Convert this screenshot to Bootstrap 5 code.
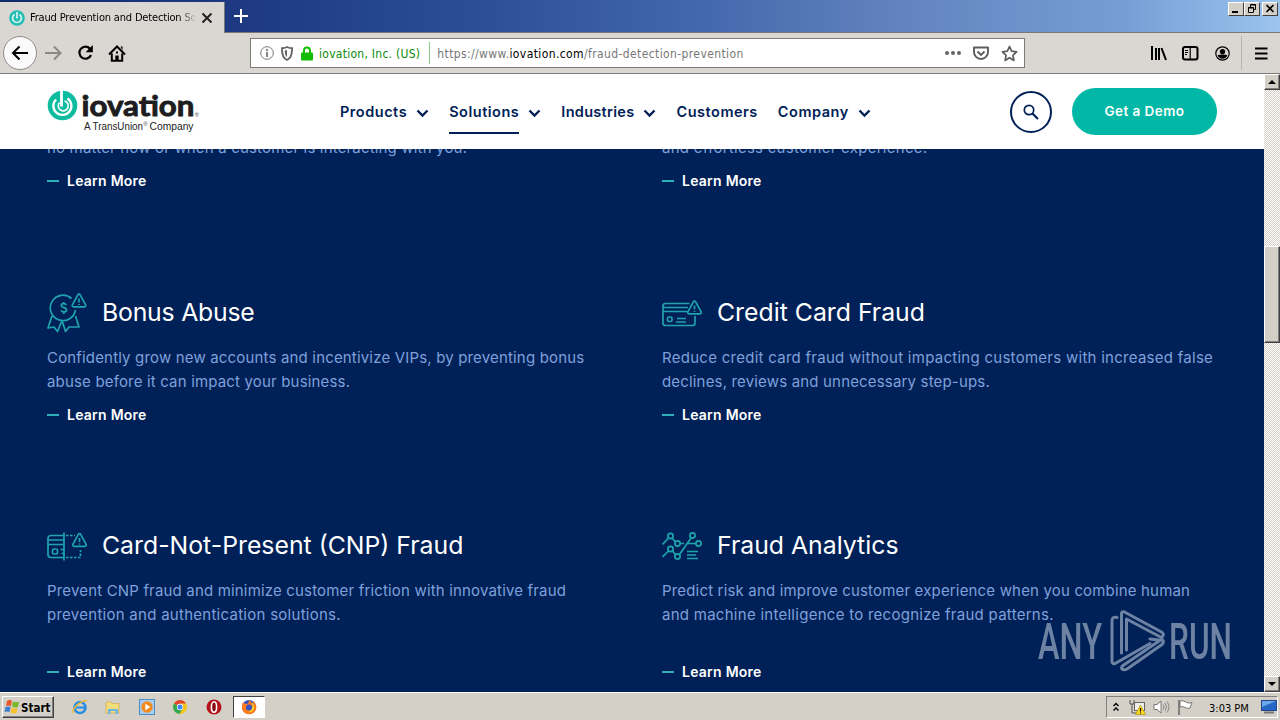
<!DOCTYPE html>
<html lang="en">
<head>
<meta charset="utf-8">
<meta name="viewport" content="width=device-width, initial-scale=1">
<title>Fraud Prevention and Detection Solutions</title>
<link href="https://cdn.jsdelivr.net/npm/bootstrap@5.3.0/dist/css/bootstrap.min.css" rel="stylesheet">
<style>
  :root { --navy:#002157; --teal:#00b8a5; --chrome:#dad7d3; --face:#d4d0c8; --copy:#7fa0dc; }
  body { width:1280px; height:720px; overflow:hidden; font-family:Inter,"Liberation Sans",sans-serif; background:var(--navy); }
  svg { display:block; flex:none; }
  .ui { font-family:"DejaVu Sans Condensed","DejaVu Sans",sans-serif; font-size:11px; color:#000; white-space:nowrap; }
  .tabstrip { height:33px; background:linear-gradient(90deg,#0f2c6c 0,#1f3c86 22%,#2c4f98 38%,#4468ad 55%,#6282bd 70%,#769fd6 88%,#9cc4ee 100%); border-bottom:1px solid #77787a; }
  .tab-active { width:225px; height:31px; margin-top:2px; background:var(--chrome); border-right:1px solid #77787a; padding-left:9px; }
  .tab-title { width:166px; margin-left:5px; padding-top:1px; letter-spacing:-.17px; overflow:hidden; -webkit-mask-image:linear-gradient(90deg,#000 90%,transparent 100%); mask-image:linear-gradient(90deg,#000 90%,transparent 100%); }
  .winbtns { margin:2px 2px 0 0; }
  .winbtn { width:16px; height:14px; background:var(--face); border:1px solid; border-color:#fff #404040 #404040 #fff; }
  .toolbar { height:41px; background:var(--chrome); border-bottom:1px solid #7d7b78; }
  .backbtn { width:34px; height:34px; border:1px solid #8f8d8a; background:#fafafa; }
  .urlbar { width:775px; height:30px; border:1px solid #7e7b77; background:#fff; }
  .ev { color:#0a8a0a; font-size:12px; letter-spacing:.27px; padding-top:1px; }
  .addr { color:#777; font-size:12px; letter-spacing:.39px; padding-top:1px; }
  .addr b { color:#000; font-weight:400; }
  .viewport { height:618px; }
  .site { width:1264px; background:var(--navy); }
  .masthead { height:75px; background:#fff; color:var(--navy); }
  .masthead a { color:var(--navy); text-decoration:none; font-weight:600; font-size:14.5px; letter-spacing:.52px; }
  .masthead a.snug { letter-spacing:.3px; }
  .current { box-shadow:0 2px 0 var(--navy); }
  .menuitem { height:42px; line-height:44px; }
  .search { width:42px; height:42px; border:2px solid var(--navy); }
  .demo { width:145px; height:47px; background:var(--teal); color:#fff; font-size:13.5px; font-weight:600; letter-spacing:.45px; }
  .topics { height:543px; padding:0 0 0 47px; }
  .topic { flex:none; width:615px; height:233px; }
  .topic h3 { font-size:24.8px; font-weight:400; line-height:40px; color:#fff; margin:0 0 0 15px; white-space:nowrap; }
  .topic h3.snug { letter-spacing:-.22px; }
  .topic .pic { margin-top:2px; }
  .topic p { font-size:15px; line-height:24px; color:var(--copy); letter-spacing:.17px; margin:13px 0 0; white-space:nowrap; }
  .topic p.lead-out { margin-top:0; }
  .topic .wide { letter-spacing:.27px; }
  .learn { font-size:14px; line-height:20px; font-weight:600; letter-spacing:.25px; color:#fff; text-decoration:none; white-space:nowrap; margin-top:11px; }
  .learn.spaced { margin-top:35px; }
  .learn::before { content:""; width:12px; height:2px; background:#2fb0b8; margin-right:8px; }
  .scrollbar { width:16px; background:repeating-conic-gradient(#d4d0c8 0 25%,#fff 0 50%) 0 0/2px 2px; }
  .sb { width:16px; height:16px; background:var(--face); border:1px solid; border-color:#fff #404040 #404040 #fff; box-shadow:inset -1px -1px #808080; }
  .thumb { height:97px; margin-top:156px; }
  .watermark { left:1036px; top:606px; }
  .taskbar { height:28px; background:var(--face); border-top:1px solid #fff; }
  .start { width:52px; height:22px; border:1px solid; border-color:#fff #404040 #404040 #fff; box-shadow:inset -1px -1px #808080; font-weight:700; font-size:11.500px; }
  .task-on { width:32px; height:22px; background:#fff; border:1px solid; border-color:#404040 #fff #fff #404040; }
  .tray { width:172px; height:22px; border:1px solid; border-color:#808080 #fff #fff #808080; }
</style>
</head>
<body>
<svg width="0" height="0" class="position-absolute"><defs>
  <g id="warn"><path d="M8 1.2c.7 0 1 .4 1.300 1l5.300 9.600c.5 1-.1 2-1.200 2H2.600c-1.100 0-1.700-1-1.200-2L6.700 2.200c.3-.6.6-1 1.300-1z"/><path d="M8 5.500v4M8 11v1"/></g>
  <path id="chev" d="M1.500 1.500l5 5 5-5" fill="none" stroke="#002157" stroke-width="2.400"/>
</defs></svg>

<div class="tabstrip ui d-flex justify-content-between">
  <div class="d-flex">
    <div class="tab-active d-flex align-items-center">
      <svg width="16" height="16" viewBox="0 0 16 16"><circle cx="8" cy="8" r="7.800" fill="#25bdb3"/><path d="M5.500 4.500a4.400 4.400 0 1 0 5 0M8 2v6.500" fill="none" stroke="#d9f5f0" stroke-width="1.700"/></svg>
      <div class="tab-title">Fraud Prevention and Detection Solutions</div>
      <svg style="margin-left:5px" width="12" height="12"><path d="M1.500 1.500l9 9m0-9l-9 9" stroke="#222" stroke-width="2"/></svg>
    </div>
    <svg class="mt-2 ms-2" width="16" height="16"><path d="M8 1v14M1 8h14" stroke="#fff" stroke-width="2"/></svg>
  </div>
  <div class="winbtns d-flex">
    <div class="winbtn"><svg width="14" height="12"><path d="M3 9h6" stroke="#000" stroke-width="2"/></svg></div>
    <div class="winbtn"><svg width="14" height="12"><path d="M5.500 4V1.500h5v5H8.500M5 2h6M3.500 4.500h5v5h-5zM3 5h6" fill="none" stroke="#000"/></svg></div>
    <div class="winbtn" style="margin-left:2px"><svg width="14" height="12"><path d="M3.500 2l7 7m0-7l-7 7" stroke="#000" stroke-width="1.700"/></svg></div>
  </div>
</div>

<div class="toolbar ui d-flex align-items-center">
  <div class="backbtn rounded-circle d-flex align-items-center justify-content-center" style="margin-left:3px"><svg width="18" height="16"><path d="M17 8H2M8.500 1.500L2 8l6.500 6.500" fill="none" stroke="#000" stroke-width="2"/></svg></div>
  <svg style="margin-left:8px" width="17" height="16"><path d="M0 8h15M9 1.500L15.500 8 9 14.500" fill="none" stroke="#8b8986" stroke-width="2"/></svg>
  <svg style="margin-left:15px" width="18" height="16"><path d="M13 3.800A6 6 0 1 0 14 10" fill="none" stroke="#000" stroke-width="2.200"/><path d="M15.800 0v7.200H8.600z"/></svg>
  <svg style="margin-left:13px" width="18" height="17"><path d="M1 9.500L9 1.500l8 8M3.800 8.500v7.300h10.400V8.500" fill="none" stroke="#000" stroke-width="2"/><path d="M7.300 16v-5.500h3.400V16zM8 6.500h2v2H8zM12.500 1.500h2v4z"/></svg>
  <div class="urlbar d-flex align-items-center" style="margin-left:124px">
    <svg style="margin-left:9px" width="14" height="14"><circle cx="7" cy="7" r="6.300" fill="none" stroke="#777"/><path d="M7 6v5M7 3v2" stroke="#666" stroke-width="1.600"/></svg>
    <svg style="margin-left:6px" width="14" height="15"><path d="M7 1c2 1.200 3.500 1 5 1.200C12.200 8 11.500 12 7 14 2.500 12 1.800 8 2 2.200 3.500 2 5 2.200 7 1z" fill="none" stroke="#666" stroke-width="1.900"/><path d="M7 4v7C5 9.500 4.800 7 4.800 4.500z" fill="#666"/></svg>
    <svg style="margin-left:7px" width="12" height="15"><path d="M3 8V4.500a3 3 0 0 1 6 0V8" fill="none" stroke="#12bc00" stroke-width="2"/><rect y="6.500" width="12" height="8" rx="1" fill="#12bc00"/></svg>
    <span class="ev" style="margin-left:6px">iovation, Inc. (US)</span>
    <div style="margin-left:9px;width:1px;height:22px;background:#8cd08c"></div>
    <span class="addr" style="margin-left:7px">https://www.<b>iovation.com</b>/fraud-detection-prevention</span>
    <div class="ms-auto d-flex align-items-center" style="margin-right:6px">
      <svg width="16" height="4"><g fill="#666"><circle cx="2" cy="2" r="2"/><circle cx="8" cy="2" r="2"/><circle cx="14" cy="2" r="2"/></g></svg>
      <svg style="margin-left:12px" width="16" height="15"><path d="M1 1.500h14V6a7 7 0 0 1-14 0z" fill="none" stroke="#5d5d5d" stroke-width="1.900" stroke-linejoin="round"/><path d="M4.500 5.500L8 9l3.500-3.500" fill="none" stroke="#5d5d5d" stroke-width="1.900"/></svg>
      <svg style="margin-left:12px" width="17" height="17"><path d="M8.500 1.500l2.100 4.700 5 .6-3.700 3.500 1 5.100-4.400-2.600-4.400 2.600 1-5.100-3.700-3.500 5-.6z" fill="none" stroke="#5d5d5d" stroke-width="1.700" stroke-linejoin="round"/></svg>
    </div>
  </div>
  <svg style="margin-left:125px" width="17" height="16"><path d="M2 1v14M6 3v12M9 3v12" stroke="#000" stroke-width="2"/><path d="M11.500 3L16 15" stroke="#000" stroke-width="2"/></svg>
  <svg style="margin-left:15px" width="17" height="15"><rect x="1" y="1" width="14.500" height="12.500" rx="2" fill="none" stroke="#000" stroke-width="2"/><path d="M8.200 1v12M3 4.500h3M3 6.500h3M3 8.500h2" stroke="#000" stroke-width="1.200"/></svg>
  <svg style="margin-left:16px" width="15" height="15"><circle cx="7.500" cy="7.500" r="6.700" fill="none" stroke="#000" stroke-width="1.200"/><circle cx="7.500" cy="5.600" r="2.700"/><path d="M2.500 9.300c2-1 8-1 10 0A5.500 5.500 0 0 1 7.500 12.700a5.500 5.500 0 0 1-5-3.400z"/></svg>
  <div style="margin-left:11px;width:1px;height:34px;background:#b8b5b1"></div>
  <svg style="margin-left:13px" width="13" height="13"><path d="M0 1.500h12.500M0 6.500h12.500M0 11.500h12.500" stroke="#000" stroke-width="2"/></svg>
</div>

<main class="viewport d-flex">
  <div class="site">
    <header class="masthead d-flex align-items-start">
      <svg style="margin:14px 0 0 47px" width="156" height="48" viewBox="47 88 156 48">
        <circle cx="62.500" cy="105.500" r="14.800" fill="#0dbb9f"/>
        <path d="M67.500 98.500a9 9 0 1 1-11.500 1" fill="none" stroke="#fff" stroke-width="2.400"/><path d="M61.500 90v16.500" stroke="#fff" stroke-width="2.800"/><path d="M64.500 101a5 5 0 1 1-5 1.500" fill="none" stroke="#fff" stroke-width="1.600"/>
        <text x="81.500" y="116" font-family="Lato, sans-serif" font-weight="700" font-size="29" fill="#1d1d1f" stroke="#1d1d1f" stroke-width=".9" textLength="113" lengthAdjust="spacingAndGlyphs">iovation</text>
        <text x="194.800" y="117" font-family="Liberation Sans, sans-serif" font-size="5.500" fill="#444">®</text>
        <text x="84" y="130" font-family="Liberation Sans, sans-serif" font-size="10" fill="#222" textLength="59" lengthAdjust="spacingAndGlyphs">A TransUnion</text>
        <text x="143.300" y="126" font-family="Liberation Sans, sans-serif" font-size="6" fill="#444">®</text>
        <text x="149.500" y="130" font-family="Liberation Sans, sans-serif" font-size="10" fill="#222" textLength="44" lengthAdjust="spacingAndGlyphs">Company</text>
      </svg>
      <nav class="d-flex align-items-center" style="margin:16px 0 0 137px">
        <a href="#" class="menuitem">Products</a><svg class="mt-1" style="margin-left:9px" width="13" height="9"><use href="#chev"/></svg>
        <a href="#" class="menuitem current" style="margin-left:20px">Solutions</a><svg class="mt-1" style="margin-left:9px" width="13" height="9"><use href="#chev"/></svg>
        <a href="#" class="menuitem snug" style="margin-left:20px">Industries</a><svg class="mt-1" style="margin-left:9px" width="13" height="9"><use href="#chev"/></svg>
        <a href="#" class="menuitem" style="margin-left:20px">Customers</a>
        <a href="#" class="menuitem" style="margin-left:20px">Company</a><svg class="mt-1" style="margin-left:9px" width="13" height="9"><use href="#chev"/></svg>
      </nav>
      <div class="ms-auto d-flex" style="margin:14px 47px 0 0">
        <div class="search rounded-circle d-flex align-items-center justify-content-center" style="margin:3px 20px 0 0"><svg width="16" height="16"><circle cx="6" cy="6" r="4.700" fill="none" stroke="#002157" stroke-width="1.700"/><path d="M9.500 9.500l5.500 5.500" stroke="#002157" stroke-width="2.200"/></svg></div>
        <div class="demo rounded-pill d-flex align-items-center justify-content-center">Get a Demo</div>
      </div>
    </header>

    <div class="topics overflow-hidden">
      <div class="d-flex" style="margin-top:-13px;height:155px">
        <div class="topic"><p class="lead-out">no matter how or when a customer is interacting with you.</p><a class="learn d-flex align-items-center" href="#">Learn More</a></div>
        <div class="topic"><p class="lead-out wide">and effortless customer experience.</p><a class="learn d-flex align-items-center" href="#">Learn More</a></div>
      </div>
      <div class="d-flex">
        <section class="topic">
          <div class="d-flex align-items-center">
            <svg class="pic" width="40" height="40" viewBox="0 0 40 40" fill="none" stroke="#1fa3ad" stroke-width="1.700" stroke-linejoin="round"><path d="M24.500 5.500A12.700 12.700 0 1 0 28.500 17M5 23L1 35l6-1 3.500 4.500 4.500-11 3.500 11L22 34h10l-3.500-11"/><path d="M19.300 12c-1-2-5-1.700-5 .5 0 2.800 5.300 1.500 5.300 4.500 0 2.300-4.500 2.700-5.600.4M16.800 9v2m0 8v2"/><use href="#warn" transform="translate(24 0)"/></svg>
            <h3 class="snug">Bonus Abuse</h3>
          </div>
          <p>Confidently grow new accounts and incentivize VIPs, by preventing bonus<br>abuse before it can impact your business.</p>
          <a class="learn d-flex align-items-center" href="#">Learn More</a>
        </section>
        <section class="topic">
          <div class="d-flex align-items-center">
            <svg class="pic" width="40" height="40" viewBox="0 0 40 40" fill="none" stroke="#1fa3ad" stroke-width="1.700" stroke-linejoin="round"><path d="M27.500 10.500H3.500Q1 10.500 1 13v17q0 2.500 2.500 2.500h27q2.500 0 2.500-2.500v-7M1 14.500h25M1 18.500h24M15 25.500h9M14 29h10"/><rect x="5.500" y="24" width="4.500" height="4.500" rx="1.500"/><use href="#warn" transform="translate(24.500 7)"/></svg>
            <h3>Credit Card Fraud</h3>
          </div>
          <p><span class="wide">Reduce credit card fraud without impacting customers with increased false</span><br>declines, reviews and unnecessary step-ups.</p>
          <a class="learn d-flex align-items-center" href="#">Learn More</a>
        </section>
      </div>
      <div class="d-flex">
        <section class="topic">
          <div class="d-flex align-items-center">
            <svg class="pic" width="40" height="40" viewBox="0 0 40 40" fill="none" stroke="#1fa3ad" stroke-width="1.700" stroke-linejoin="round"><path d="M17 9.500H4q-3 0-3 3v16q0 3 3 3h13M17 6.500v28M1 14h16M1 18.500h16M13.500 23.500h3M14.500 27.500h2"/><rect x="5.500" y="23" width="5" height="5" rx="1.500"/><path d="M19 9.500h9M19 31.500h14.500V24" stroke-dasharray="2.500 1.500"/><use href="#warn" transform="translate(24.500 6.500)"/></svg>
            <h3>Card-Not-Present (CNP) Fraud</h3>
          </div>
          <p>Prevent CNP fraud and minimize customer friction with innovative fraud<br><span class="wide">prevention and authentication solutions.</span></p>
          <a class="learn spaced d-flex align-items-center" href="#">Learn More</a>
        </section>
        <section class="topic">
          <div class="d-flex align-items-center">
            <svg class="pic" width="40" height="40" viewBox="0 0 40 40" fill="none" stroke="#1fa3ad" stroke-width="1.700" stroke-linejoin="round"><circle cx="8.500" cy="10" r="2.600"/><circle cx="15.500" cy="17.500" r="2.600"/><circle cx="30.500" cy="9.500" r="2.600"/><circle cx="36.500" cy="17.500" r="2.600"/><circle cx="8.500" cy="23" r="2.600"/><circle cx="15.500" cy="30.500" r="2.600"/><path d="M.5 18.500L6.500 12M10 12l3.500 4M18 17.500h4M29 12L17.500 28.500M26 17.500h8M.5 31l6-6M10.500 25l3.300 4M25 25.500h11M25 29h9M25 32.500h11"/></svg>
            <h3>Fraud Analytics</h3>
          </div>
          <p>Predict risk and improve customer experience when you combine human<br><span class="wide">and machine intelligence to recognize fraud patterns.</span></p>
          <a class="learn spaced d-flex align-items-center" href="#">Learn More</a>
        </section>
      </div>
    </div>
  </div>
  <div class="scrollbar d-flex flex-column">
    <div class="sb"><svg width="14" height="14"><path d="M3 9h8L7 5z"/></svg></div>
    <div class="sb thumb"></div>
    <div class="sb mt-auto"><svg width="14" height="14"><path d="M3 5h8L7 9z"/></svg></div>
  </div>
</main>

<div class="watermark position-absolute">
  <svg width="198" height="70" viewBox="1036 606 198 70" opacity=".65">
    <g font-family="Roboto, sans-serif" font-size="50" font-weight="500" fill="#a9b7cc"><text x="1038" y="659" textLength="64" lengthAdjust="spacingAndGlyphs">ANY</text><text x="1169" y="659" textLength="63" lengthAdjust="spacingAndGlyphs">RUN</text></g>
    <g fill="none" stroke="#a9b7cc" stroke-width="3" stroke-linejoin="round" stroke-linecap="round"><path d="M1121.500 653V614q0-3 3-2l37 20q3 2 1 4.500-1 1-3 0L1126.500 619v31"/><path d="M1117 617.500q-5-1-5 3V662q1 3 4 1l34-19.500"/><path d="M1150 639l13 1.500q1 2-1 4L1127 669q-3 1.500-5 0-1-2 1-3.500L1162 639"/></g>
  </svg>
</div>

<footer class="taskbar ui d-flex align-items-center">
  <div class="start d-flex align-items-center" style="margin-left:2px">
    <svg style="margin-left:1px" width="17" height="16"><path d="M3 2q3-2 5 0L7 7Q4 6 2 7z" fill="#e8582c"/><path d="M9 2.500q3 1.500 6 0L14 8q-3 1-6-.5z" fill="#78b82a"/><path d="M1.500 8q3-1 5 0l-1 5q-3-1-5 0z" fill="#3b7fd0"/><path d="M7.500 8.500q3 1.500 6 .5l-1 5q-3 1-6-.5z" fill="#f8c12c"/></svg><span class="pt-1 lh-1">Start</span>
  </div>
  <svg style="margin-left:18px" width="16" height="16"><circle cx="8" cy="8.500" r="5.500" fill="none" stroke="#2b8ee0" stroke-width="2.600"/><path d="M3 8.500h10" stroke="#2b8ee0" stroke-width="2.200"/><path d="M1 14C0 9 10 0 15 2" fill="none" stroke="#e8b832" stroke-width="1.500"/></svg>
  <svg style="margin-left:17px" width="16" height="16"><path d="M1 3h5l1 1.500h7V14H1z" fill="#f4dc7c" stroke="#cfae4c" stroke-width=".7"/><path d="M3 15v-5h10v5h-2.500v-3h-5v3z" fill="#6bb6e2"/></svg>
  <svg style="margin-left:18px" width="16" height="16"><rect x=".5" y=".5" width="15" height="15" fill="#a9cdee" stroke="#4c8cc8"/><circle cx="8" cy="8" r="5.700" fill="#f28a1c"/><path d="M6.300 4.800l5 3.200-5 3.200z" fill="#fff"/></svg>
  <svg style="margin-left:18px" width="14" height="14"><circle cx="7" cy="7" r="7" fill="#f5c518"/><path d="M7 7L1 3.500A7 7 0 0 1 13 3.500H7z" fill="#df4632"/><path d="M7 7L1 3.500A7 7 0 0 0 6.500 14L9.500 9z" fill="#35a853"/><circle cx="7" cy="7" r="3.200" fill="#fff"/><circle cx="7" cy="7" r="2.500" fill="#4285f4"/></svg>
  <svg style="margin-left:19px" width="16" height="16"><circle cx="8" cy="8" r="7.500" fill="#b5141c"/><ellipse cx="8" cy="8" rx="2.600" ry="5.200" fill="#8a0c12" stroke="#fff" stroke-width="1.600"/></svg>
  <div class="task-on d-flex align-items-center justify-content-center" style="margin-left:11px"><svg width="16" height="16"><circle cx="8" cy="8" r="7" fill="#3352c4"/><path d="M2 3Q0 8 2 12q3 4 8 3 5-1 5.500-7Q15 4 12 2q1 3 0 5-1-5-5-6 2 3-1 4Q3 5 2 3z" fill="#ff7a1a"/><circle cx="8" cy="8.500" r="3" fill="#3352c4"/><path d="M11 3q3 3 2 7-2 4-6 3 6-2 4-10z" fill="#ffd02e"/></svg></div>
  <div class="tray ms-auto d-flex align-items-center" style="margin-right:2px">
    <svg style="margin-left:5px" width="8" height="10"><path d="M1.500 4L4 1.500 6.500 4M1.500 8.500L4 6l2.500 2.500" fill="none" stroke="#000" stroke-width="1.400"/></svg>
    <svg style="margin-left:9px" width="17" height="16"><rect x="5.500" y="3.500" width="10" height="8" fill="#eee" stroke="#666"/><path d="M1 1v4h4V1M3 5v9h5" fill="none" stroke="#555"/><path d="M11.500 6l5 9.500h-10z" fill="#ffd91c" stroke="#a88a00" stroke-width=".6"/><path d="M11.500 9v3.500m0 1v1" stroke="#000" stroke-width="1.200"/></svg>
    <svg style="margin-left:7px" width="17" height="16"><path d="M1 5.500h3L8 2v12L4 10.500H1z" fill="#fff" stroke="#777"/><path d="M10 5.500q2 2.500 0 5M12 4q3 4 0 8M14 2.500q4 5.500 0 11" fill="none" stroke="#888"/></svg>
    <svg style="margin-left:7px" width="17" height="16"><path d="M2 1v15" stroke="#666" stroke-width="1.500"/><path d="M3 2q3-1 6 1t6 .5L13 9q-3 1-5-.5T3 8z" fill="#fff" stroke="#777"/></svg>
    <span class="pt-1 lh-1" style="margin-left:15px">3:03 PM</span>
    <svg style="margin-left:12px" width="16" height="14"><rect x=".5" y=".5" width="15" height="10" fill="#2667c4" stroke="#24448c"/><path d="M1 1h14L1 7z" fill="#6ca8ec"/><path d="M3 12.500h10" stroke="#777" stroke-width="2"/></svg>
  </div>
</footer>
<script src="https://cdn.jsdelivr.net/npm/bootstrap@5.3.0/dist/js/bootstrap.bundle.min.js"></script>
</body>
</html>
